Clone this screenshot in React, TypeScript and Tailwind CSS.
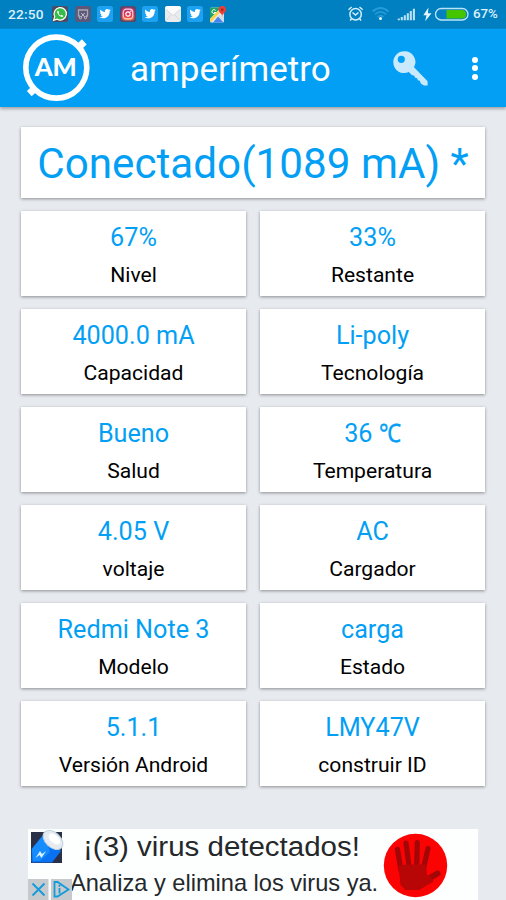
import React from "react";

const stats: [string, string][] = [
  ["67%", "Nivel"],
  ["33%", "Restante"],
  ["4000.0 mA", "Capacidad"],
  ["Li-poly", "Tecnología"],
  ["Bueno", "Salud"],
  ["36 ℃", "Temperatura"],
  ["4.05 V", "voltaje"],
  ["AC", "Cargador"],
  ["Redmi Note 3", "Modelo"],
  ["carga", "Estado"],
  ["5.1.1", "Versión Android"],
  ["LMY47V", "construir ID"],
];

const twitterPath =
  "M23.6 4.9c-.9.4-1.800.7-2.800.8 1-.6 1.800-1.600 2.200-2.700-1 .6-2 1-3.100 1.200a4.900 4.900 0 0 0-8.400 4.500C7.700 8.500 4.100 6.600 1.700 3.600a4.900 4.900 0 0 0 1.500 6.600c-.8 0-1.600-.2-2.200-.6v.1c0 2.400 1.700 4.400 3.900 4.800-.7.2-1.500.2-2.200.1.600 2 2.400 3.400 4.600 3.400A9.900 9.900 0 0 1 0 20a14 14 0 0 0 7.600 2.200c9.100 0 14-7.500 14-14v-.6c1-.7 1.800-1.600 2-2.700z";

function Twitter() {
  return (
    <svg className="size-4" viewBox="0 0 16 16">
      <rect width="16" height="16" rx="2.500" fill="#1da1f2" />
      <g transform="translate(2.500 1.800) scale(.47)">
        <path fill="#fff" d={twitterPath} />
      </g>
    </svg>
  );
}

function Whatsapp() {
  return (
    <svg className="size-4" viewBox="0 0 16 16">
      <rect width="16" height="16" rx="2.500" fill="#4e4a60" />
      <path d="M1.600 14.300l1.100-3.700a6.200 6.200 0 1 1 2.500 2.600z" fill="#35bd48" stroke="#fff" strokeWidth="1.200" />
      <path d="M6 4.500c-1.400.9-.9 3 .9 4.700s3.700 2.300 4.500.8l-1.700-1.200-.9.800c-1-.4-1.800-1.100-2.100-2.200l.6-.9z" fill="#fff" />
    </svg>
  );
}

function Screenshot() {
  return (
    <svg className="size-4" viewBox="0 0 16 16" fill="none">
      <rect width="16" height="16" rx="2.500" fill="#5c587a" />
      <path d="M5 10H3.500V4h9v6H11" stroke="#aaa8b3" strokeWidth="1.300" />
      <path d="M6.200 7l3.600 4M9.800 7l-3.600 4" stroke="#c4c0c5" />
      <circle cx="5.500" cy="11.700" r="1.100" stroke="#c4c0c5" />
      <circle cx="10.500" cy="11.700" r="1.100" stroke="#c4c0c5" />
    </svg>
  );
}

function Instagram() {
  return (
    <svg className="size-4" viewBox="0 0 16 16">
      <defs>
        <linearGradient id="insta" x2="0" y2="1">
          <stop stopColor="#a83980" />
          <stop offset=".55" stopColor="#e52e50" />
          <stop offset="1" stopColor="#f27b3b" />
        </linearGradient>
      </defs>
      <rect width="16" height="16" rx="2.500" fill="#5c486b" />
      <rect x="1.500" y="1.500" width="13" height="13" rx="4" fill="url(#insta)" />
      <rect x="3.200" y="3.200" width="9.600" height="9.600" rx="3.200" fill="none" stroke="#f8d7dc" strokeWidth="1.200" />
      <circle cx="8" cy="8" r="2.200" fill="none" stroke="#fff" strokeWidth="1.200" />
      <circle cx="10.900" cy="5.200" r=".7" fill="#fff" />
    </svg>
  );
}

function Mail() {
  return (
    <svg className="size-4" viewBox="0 0 16 16">
      <rect width="16" height="16" rx="2.500" fill="#e9ebed" />
      <path d="M0 3V2.500Q0 0 2.500 0h11Q16 0 16 2.500V3L8 9.500z" fill="#fbfbfb" />
      <path d="M.5 3L8 9.500 15.500 3M1.500 14l5-5.500M14.500 14l-5-5.500" fill="none" stroke="#d2d6da" strokeWidth=".9" />
    </svg>
  );
}

function Maps() {
  return (
    <svg className="h-[17px] w-4 overflow-visible" viewBox="0 0 16 17">
      <rect y="1.500" width="14" height="15" rx="1.500" fill="#e8eaed" />
      <path d="M0 3q0-1.500 1.500-1.500H11L0 13z" fill="#20a465" />
      <path d="M5.600 4.500a2 2 0 1 0 .2 2H4" fill="none" stroke="#fff" />
      <path d="M3 16.500l5-6 5.500 6z" fill="#4285f4" />
      <path d="M0 13l8-8 1.500 2L1 16.200Q0 16 0 13z" fill="#fcd34b" />
      <path d="M8 10l6 6V8z" fill="#d6dbe1" />
      <path d="M12.300 10c-.2-2.500-3.800-3-3.800-6.200a3.700 3.700 0 0 1 7.400 0c0 3.200-3.400 3.700-3.600 6.200z" fill="#ee3d35" />
      <circle cx="12.200" cy="3.800" r="1.300" fill="#962b2b" />
    </svg>
  );
}

function StatusBar() {
  return (
    <div className="flex h-7 items-center bg-[#0080c0] pl-2 text-[#dcf1fc]">
      <span className="w-[44px] text-[13.7px] leading-7 font-medium tracking-[0.2px]">22:50</span>
      <div className="flex w-[180px] items-center gap-[6.5px]">
        <Whatsapp />
        <Screenshot />
        <Twitter />
        <Instagram />
        <Twitter />
        <Mail />
        <Twitter />
        <Maps />
      </div>
      <svg className="ml-[114px] h-7 w-[126px]" viewBox="346 0 126 28" fill="none">
        <g stroke="#d5effb" strokeWidth="1.500">
          <circle cx="355.600" cy="14.300" r="5.700" />
          <path d="M352.500 12.500l3 2.500 3-2.500M348.500 9.700l3.200-2.700M359.500 7l3.200 2.700M351.500 18.700l-1.300 1.800M359.700 18.700l1.300 1.800" />
        </g>
        <g stroke="#269bd7" strokeWidth="1.700">
          <path d="M372.500 11.500q8-7 16 0M375 14.300q5.500-4.800 11 0M377.500 17q3-2.600 6 0" />
        </g>
        <circle cx="380.500" cy="18.400" r="1.500" fill="#e8f8ff" />
        <path d="M398.800 20.300v-1.700M401.800 20.300v-3.200M404.800 20.300v-5M407.800 20.300v-7M410.800 20.300v-9.300M413.900 20.300V8.800" stroke="#b8e2f6" strokeWidth="2.100" />
        <path d="M428.500 7.500l-5.200 7.700h3.200l-1.300 6 6.300-8h-3.600z" fill="#e5f6ff" />
        <rect x="435.500" y="8.500" width="32.500" height="11.500" rx="5.700" stroke="#bce3f6" strokeWidth="1.300" />
        <path d="M446.500 10h15.300q4 0 4.300 4.200-.3 4.300-4.300 4.300h-15.300z" fill="#45c500" />
      </svg>
      <span className="pl-[1px] text-[13.3px] leading-7 font-medium">67%</span>
    </div>
  );
}

function Header() {
  return (
    <header className="relative flex h-[79px] items-center border-t border-[#0589cc] bg-[#039ff4] shadow-[0_2px_3px_rgba(0,0,0,0.3)]">
      <svg className="ml-[20px] h-[78px] w-[74px]" viewBox="20 29 74 78">
        <path d="M29.300 93.600L84.300 41.900" stroke="#fff" strokeWidth="7" />
        <circle cx="56.300" cy="67.600" r="30.500" fill="#039ff4" stroke="#fff" strokeWidth="5.600" />
        <text x="55.800" y="75.500" textAnchor="middle" textLength="42" lengthAdjust="spacingAndGlyphs" fill="#fff" fontFamily="Lato" fontWeight="900" fontSize="25.500">AM</text>
      </svg>
      <h1 className="ml-[36px] w-[250px] pt-[3px] text-[35px] leading-[42px] text-white">amperímetro</h1>
      <svg className="ml-[12px] h-[36px] w-[36px]" viewBox="392 49 36 36">
        <path fillRule="evenodd" fill="#c9eafd" d="M404 50.300a10.800 10.800 0 0 0-10.700 10.800 10.800 10.800 0 0 0 15.500 9.900l3.300 3.200 2 .3.800 2 2.300.7.500 2.100 2.100.4 1 2.800 3.100 2h3.700v-4.300L414 66.300a10.800 10.800 0 0 0-10-16zM401.300 54.700a3.600 3.600 0 1 1 0 7.200 3.600 3.600 0 0 1 0-7.200z" />
      </svg>
      <div className="ml-[44px] flex flex-col gap-[2.500px]">
        <i className="size-[6px] rounded-full bg-white" />
        <i className="size-[6px] rounded-full bg-white" />
        <i className="size-[6px] rounded-full bg-white" />
      </div>
    </header>
  );
}

function Advert() {
  return (
    <div className="relative mx-7 mt-[43px] h-[71px] overflow-hidden bg-[#fdfefe] font-['Liberation_Sans',sans-serif] text-[#24282b]">
      <div className="pl-[55px] pt-[2px] text-[27px] leading-[32px] whitespace-nowrap">
        <span className="inline-block origin-left scale-x-[1.092]">¡(3) virus detectados!</span>
      </div>
      <div className="pl-[42px] pt-[6px] text-[24px] leading-[28px] whitespace-nowrap">
        <span className="inline-block origin-left scale-x-[0.983]">Analiza y elimina los virus ya.</span>
      </div>
      <svg className="absolute inset-0 h-[71px] w-[450px]" viewBox="28 829 450 71">
        <path d="M31 832h31v31H31z" fill="#293048" />
        <path d="M31.500 862.500V849L44 834l17 17-9 11.500z" fill="#0872f2" />
        <path d="M32 849l12-15 6 18-10 9h-7z" fill="#168cff" />
        <ellipse cx="53" cy="840" rx="11.500" ry="7.500" transform="rotate(43 53 840)" fill="#e5ebef" stroke="#bfd3e1" />
        <ellipse cx="54.500" cy="839" rx="7" ry="4" transform="rotate(43 54.500 839)" fill="#fff" />
        <path d="M35.500 858l4.500-7 2 3 4-3-4.500 7-2-3z" fill="#d8f2ff" />
        <path d="M28 879h20.500v21H28zM51 879h21v21H51z" fill="#c7cacc" />
        <path d="M32.500 883.500l12 12m0-12l-12 12" stroke="#139bdc" strokeWidth="1.900" />
        <path d="M54.500 882v14.500h3l11-7-11-7.500zM59.500 888v5.500" fill="none" stroke="#139bdc" strokeWidth="1.800" />
        <circle cx="59.500" cy="885.800" r="1.100" fill="#139bdc" />
        <circle cx="415.500" cy="865.500" r="31.700" fill="#fb0303" />
        <g fill="none" stroke="#a30606" strokeLinecap="round" strokeWidth="5.200">
          <path d="M397.500 849.500l3.500 21M406 843l3 23M417.300 842.500l-.6 24M428 848.500l-4.500 20" />
          <path d="M429 878.500l8.500-5" strokeWidth="6" />
        </g>
        <path d="M398.500 866l8-1.500h19.500l1 11 3.500.5 3 5.500-7 4-7 4.500h-14l-5-5z" fill="#b80505" />
      </svg>
    </div>
  );
}

export default function App() {
  return (
    <div className="h-[900px] w-[506px] overflow-hidden bg-[#e7eaef] font-['Roboto',sans-serif]">
      <StatusBar />
      <Header />
      <main className="px-[21px] pt-5">
        <section className="flex h-[71px] items-center justify-center bg-white text-[42.2px] leading-none whitespace-nowrap text-[#039ff4] shadow-[0_1px_3px_rgba(0,0,0,0.4)]">
          <span className="pt-[4px]">Conectado(1089 mA) *</span>
        </section>
        <section className="mt-[13px] grid grid-cols-2 gap-x-[14px] gap-y-[13px]">
          {stats.map(([value, label]) => (
            <article key={label} className="flex h-[85px] flex-col items-center bg-white pt-[11px] shadow-[0_1px_3px_rgba(0,0,0,0.4)]">
              <span className="text-[25.2px] leading-8 text-[#039ff4]">
                {value.endsWith("℃") ? (
                  <>
                    36 <span className="-mr-[3px] inline-block origin-left scale-x-[0.88] [-webkit-text-stroke:0.4px_#039ff4]">℃</span>
                  </>
                ) : (
                  value
                )}
              </span>
              <span className="mt-[7px] text-[21.1px] leading-7 text-black">{label}</span>
            </article>
          ))}
        </section>
      </main>
      <Advert />
    </div>
  );
}
